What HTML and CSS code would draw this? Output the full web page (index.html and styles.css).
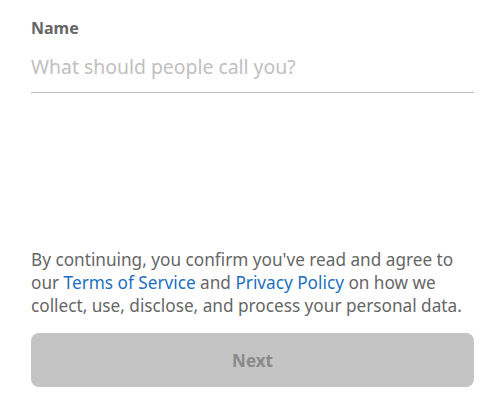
FILE: index.html
```html
<!DOCTYPE html>
<html>
<head>
<meta charset="utf-8">
<link rel="stylesheet" href="styles.css">
</head>
<body>
<div class="page">
  <div class="field">
    <label class="label">Name</label>
    <div class="input">What should people call you?</div>
  </div>
  <div class="spacer"></div>
  <p class="terms">By continuing, you confirm you've read and agree to our <a class="link">Terms of Service</a> and <a class="link">Privacy Policy</a> on how we collect, use, disclose, and process your personal data.</p>
  <div class="button">Next</div>
</div>
</body>
</html>
```
FILE: styles.css
```css
html, body {
  margin: 0;
  padding: 0;
  background: #ffffff;
}
.page {
  width: 494px;
  height: 401px;
  box-sizing: border-box;
  padding: 17px 20px 14px 31px;
  display: flex;
  flex-direction: column;
  font-family: "Noto Sans", sans-serif;
}
.field {
  display: flex;
  flex-direction: column;
}
.label {
  font-size: 16px;
  font-weight: 700;
  color: #666666;
  line-height: 23px;
}
.input {
  margin-top: 12px;
  font-size: 19.4px;
  color: #c0c0c0;
  line-height: 30px;
  padding-bottom: 10px;
  border-bottom: 1px solid #bdbdbd;
}
.spacer {
  flex: 1;
}
.terms {
  margin: 0;
  font-size: 17.2px;
  line-height: 23px;
  color: #666666;
}
.link {
  color: #1c6fbf;
}
.button {
  margin-top: 16px;
  height: 54px;
  border-radius: 8px;
  background: #c4c4c4;
  color: #8a8a8a;
  font-size: 17px;
  font-weight: 700;
  display: flex;
  align-items: center;
  justify-content: center;
}
```
